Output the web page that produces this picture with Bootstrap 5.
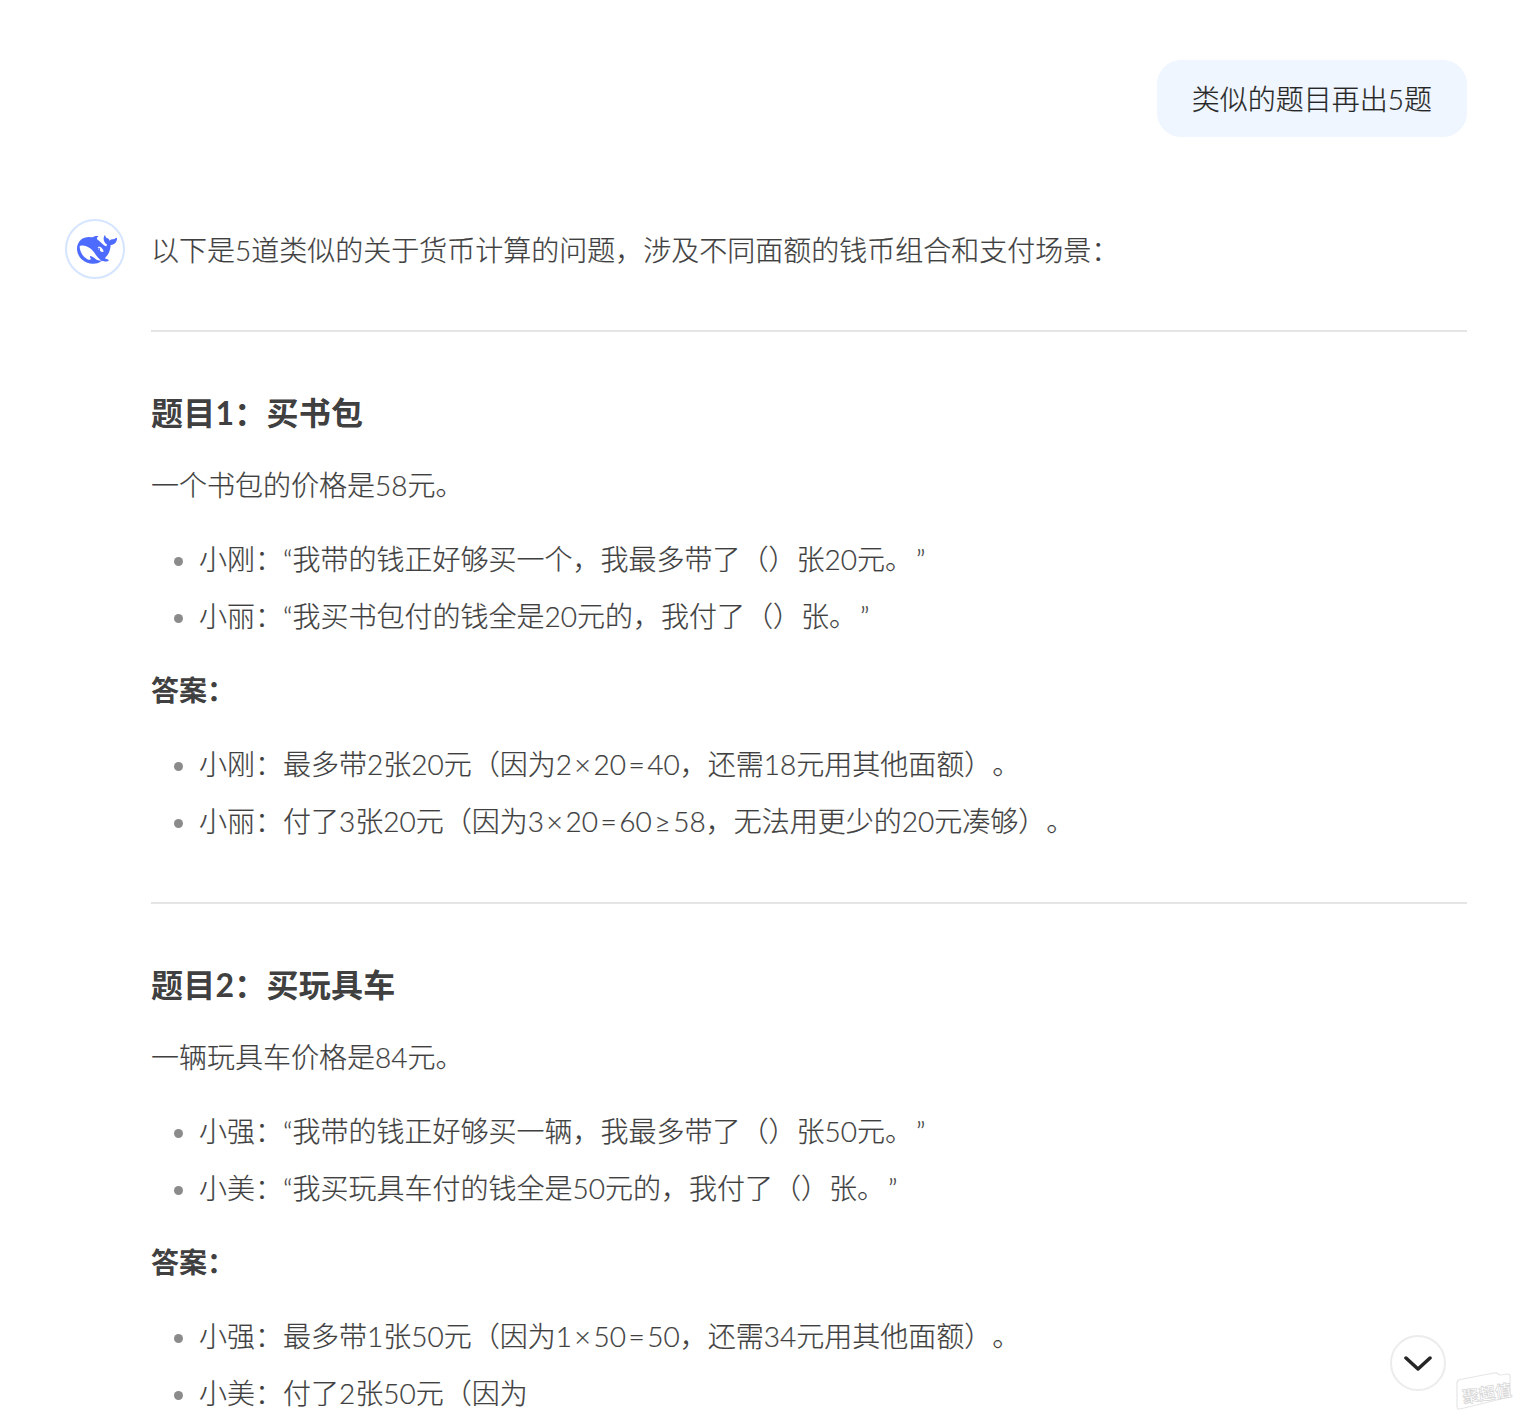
<!DOCTYPE html>
<html lang="zh-CN">
<head>
<meta charset="utf-8">
<title>类似的题目再出5题</title>
<link href="https://cdn.jsdelivr.net/npm/bootstrap@5.3.0/dist/css/bootstrap.min.css" rel="stylesheet">
<style>
html,body{height:1422px;overflow:hidden;background:#fff}
body{font-family:"Lato","Noto Sans CJK SC",sans-serif;font-size:28px;line-height:49px;color:#404040;font-weight:300;position:relative;text-spacing-trim:space-all;-webkit-text-stroke:.2px}
.chat-wrap{padding:60px 54px 0 65px}
.user-bubble{background:#eff6ff;border-radius:24px;padding:15px 35px 13px;color:#262626}
.reply-row{margin-top:82px}
.whale{width:60px;height:60px;border:2px solid #d5e4ff;border-radius:50%;flex:none;margin-right:26px;padding-left:3px}
.reply-body{min-width:0;flex:1 1 auto;padding-top:7px}
.reply-body p{margin:0 0 8px}
.reply-body p.intro-p{margin:0 0 -1px}
.reply-body hr{margin:56px 0;border:0;border-top:2px solid #e5e5e5;opacity:1}
.reply-body h3{font-size:32px;line-height:49px;font-weight:700;margin:0 0 24px;color:#404040;letter-spacing:.25px;-webkit-text-stroke:0}
.reply-body p.lead-p{margin-bottom:25px}
.reply-body p.ans{font-weight:700;margin:25px 0 25px;color:#404040;-webkit-text-stroke:0}
.reply-body ul{margin:0;padding-left:48px}
.reply-body li{margin-bottom:8px}
.reply-body li::marker{color:#8b8b8b}
.op{padding:0 2.6px}
.cq{margin-left:3px}
.scroll-btn{position:absolute;left:1390px;top:1335px;width:56px;height:56px;border:2px solid #ececec;border-radius:50%;background:#fff}
.stamp{position:absolute;left:1454px;top:1368px;-webkit-text-stroke:0}
</style>
</head>
<body>
<div class="chat-wrap">
  <div class="d-flex justify-content-end"><div class="user-bubble">类似的题目再出5题</div></div>
  <div class="reply-row d-flex">
    <div class="whale d-flex align-items-center justify-content-center">
      <svg width="40" height="29" viewBox="0 2.800 24 18" preserveAspectRatio="none"><path fill="#4d6bfe" d="M23.748 4.482c-.254-.124-.364.113-.512.234-.051.039-.094.09-.137.136-.372.397-.806.657-1.373.626-.829-.046-1.537.214-2.163.848-.133-.782-.575-1.248-1.247-1.548-.352-.156-.708-.311-.955-.65-.172-.241-.219-.51-.305-.774-.055-.16-.11-.323-.293-.35-.2-.031-.278.136-.356.276-.313.572-.434 1.202-.422 1.84.027 1.436.633 2.58 1.838 3.393.137.093.172.187.129.323-.082.28-.18.552-.266.833-.055.179-.137.217-.329.14a5.526 5.526 0 01-1.736-1.18c-.857-.828-1.631-1.742-2.597-2.458a11.365 11.365 0 00-.689-.471c-.985-.957.13-1.743.388-1.836.27-.098.093-.432-.779-.428-.872.004-1.67.295-2.687.684a3.055 3.055 0 01-.465.137 9.597 9.597 0 00-2.883-.102c-1.885.21-3.39 1.102-4.497 2.623C.082 8.606-.231 10.684.152 12.85c.403 2.284 1.569 4.175 3.36 5.653 1.858 1.533 3.997 2.284 6.438 2.14 1.482-.085 3.133-.284 4.994-1.86.47.234.962.327 1.78.397.63.059 1.236-.03 1.705-.128.735-.156.684-.837.419-.961-2.155-1.004-1.682-.595-2.113-.926 1.096-1.296 2.746-2.642 3.392-7.003.05-.347.007-.565 0-.845-.004-.17.035-.237.23-.256a4.173 4.173 0 001.545-.475c1.396-.763 1.96-2.015 2.093-3.517.02-.23-.004-.467-.247-.588zM11.581 18c-2.089-1.642-3.102-2.183-3.52-2.16-.392.024-.321.471-.235.763.09.288.207.486.371.739.114.167.192.416-.113.603-.673.416-1.842-.14-1.897-.167-1.361-.802-2.5-1.86-3.301-3.307-.774-1.393-1.224-2.887-1.298-4.482-.02-.386.093-.522.477-.592a4.696 4.696 0 011.529-.039c2.132.312 3.946 1.265 5.468 2.774.868.86 1.525 1.887 2.202 2.891.72 1.066 1.494 2.082 2.48 2.914.348.292.625.514.891.677-.802.09-2.14.11-3.054-.614zm1-6.44a.306.306 0 01.415-.287.302.302 0 01.2.288.306.306 0 01-.31.307.303.303 0 01-.304-.308zm3.11 1.596c-.2.081-.399.151-.59.16a1.245 1.245 0 01-.798-.254c-.274-.23-.47-.358-.552-.758a1.73 1.73 0 01.016-.588c.07-.327-.008-.537-.239-.727-.187-.156-.426-.199-.688-.199a.559.559 0 01-.254-.078c-.11-.054-.2-.19-.114-.358.028-.054.16-.186.192-.21.356-.202.767-.136 1.146.016.352.144.618.408 1.001.782.391.451.462.576.685.914.176.265.336.537.445.848.067.195-.019.354-.25.452z"/></svg>
    </div>
    <div class="reply-body">
      <p class="intro-p">以下是5道类似的关于货币计算的问题，涉及不同面额的钱币组合和支付场景：</p>
      <hr>
      <h3>题目1：买书包</h3>
      <p class="lead-p">一个书包的价格是58元。</p>
      <ul>
        <li>小刚：“我带的钱正好够买一个，我最多带了（）张20元。<span class="cq">”</span></li>
        <li>小丽：“我买书包付的钱全是20元的，我付了（）张。<span class="cq">”</span></li>
      </ul>
      <p class="ans">答案：</p>
      <ul>
        <li>小刚：最多带2张20元（因为2<span class="op">×</span>20<span class="op">=</span>40，还需18元用其他面额）。</li>
        <li>小丽：付了3张20元（因为3<span class="op">×</span>20<span class="op">=</span>60<span class="op">≥</span>58，无法用更少的20元凑够）。</li>
      </ul>
      <hr>
      <h3>题目2：买玩具车</h3>
      <p class="lead-p">一辆玩具车价格是84元。</p>
      <ul>
        <li>小强：“我带的钱正好够买一辆，我最多带了（）张50元。<span class="cq">”</span></li>
        <li>小美：“我买玩具车付的钱全是50元的，我付了（）张。<span class="cq">”</span></li>
      </ul>
      <p class="ans">答案：</p>
      <ul>
        <li>小强：最多带1张50元（因为1<span class="op">×</span>50<span class="op">=</span>50，还需34元用其他面额）。</li>
        <li>小美：付了2张50元（因为</li>
      </ul>
    </div>
  </div>
</div>
<div class="scroll-btn d-flex align-items-center justify-content-center">
  <svg width="28" height="16" viewBox="0 0 28 16"><path d="M2 3l12 11L26 3" fill="none" stroke="#262626" stroke-width="3.500" stroke-linecap="round" stroke-linejoin="round"/></svg>
</div>
<svg class="stamp" width="60" height="46" viewBox="0 0 60 46"><path d="M3 15q0-3 3-3.500L40 5q3-.5 4 1l2 1 8-1q2 0 2 2v18q0 3-3 3.500L6 41q-3 .5-3-2z" fill="#fff" stroke="#e6e6e6" stroke-width="1.200"/><text x="8" y="32" transform="rotate(-9 30 24)" font-size="16.500" font-weight="700" fill="#fff" stroke="#d6d6d6" stroke-width=".7" font-family="Noto Sans CJK SC">聚超值</text></svg>
<script src="https://cdn.jsdelivr.net/npm/bootstrap@5.3.0/dist/js/bootstrap.bundle.min.js"></script>
</body>
</html>
